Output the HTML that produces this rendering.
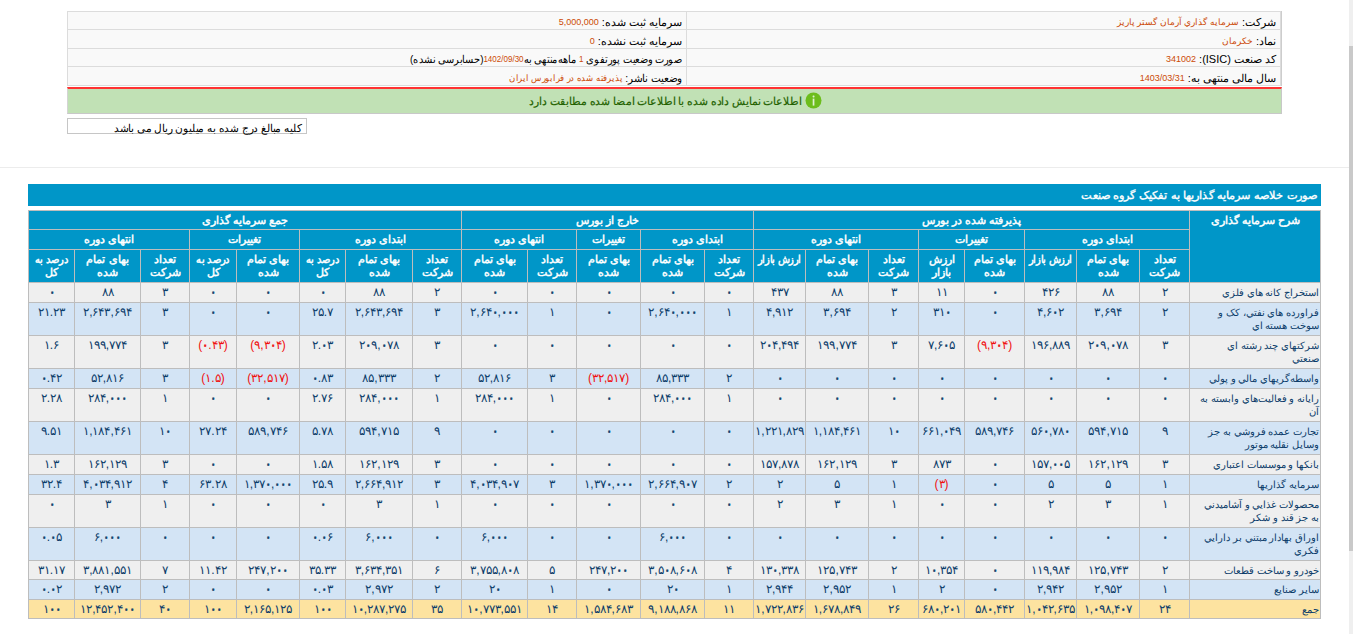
<!DOCTYPE html>
<html lang="fa" dir="rtl">
<head>
<meta charset="utf-8">
<style>
html,body{margin:0;padding:0;background:#fff;width:1353px;height:634px;overflow:hidden;}
body{position:relative;font-family:"Liberation Sans",sans-serif;}
.sb{position:absolute;left:1349px;top:0;width:4px;height:634px;background:#efefef;}
.sb i{position:absolute;left:0;top:46px;width:4px;height:505px;background:#c9c9c9;}
#info{position:absolute;left:67px;top:11px;width:1214px;box-shadow:1px 0 0 #cdcdcd;border-collapse:collapse;table-layout:fixed;background:#f9f9f9;}
#info td{border:1px solid #dcdcdc;padding:4px 4px 0 0;font-size:11px;color:#000;white-space:nowrap;overflow:hidden;text-align:right;vertical-align:middle;}
#info .sx{display:inline-block;transform-origin:100% 50%;}
#info .v{color:#cc4a06;font-size:9px;vertical-align:1px;}
#green{position:absolute;left:67px;top:87px;width:1213px;height:24px;background:#c1e1b5;border-top:2px solid #f33;border-bottom:1px solid #c8c8c8;border-right:1px solid #c8c8c8;border-left:1px solid #d4d4d4;}
#green span{position:absolute;right:479px;top:6px;font-size:11px;transform:scaleX(0.975);transform-origin:100% 50%;color:#236200;white-space:nowrap;-webkit-text-stroke:0.2px #236200;}
#green svg{position:absolute;left:737px;top:3px;width:17px;height:17px;}
#note{position:absolute;left:67px;top:118px;width:238px;height:14px;border:1px solid #c6c6c6;background:#fff;font-size:11px;color:#000;text-align:right;}
#note span{position:absolute;right:5px;top:3px;white-space:nowrap;transform:scaleX(0.96);transform-origin:100% 50%;}
.hr{position:absolute;left:0;top:167px;width:1349px;height:1px;background:#ececec;}
#title{position:absolute;left:28px;top:184px;width:1293px;height:22px;background:#0096c8;color:#fff;font-size:11px;font-weight:normal;}
#title span{position:absolute;right:4px;top:5px;white-space:nowrap;-webkit-text-stroke:0.35px #fff;transform:scaleX(1.025);transform-origin:100% 50%;}
#dt{position:absolute;left:28px;top:210px;border-collapse:collapse;table-layout:fixed;width:1293px;}
#dt th,#dt td{border:1px solid #bdbdbd;padding:0;font-size:10px;white-space:nowrap;overflow:hidden;vertical-align:top;text-align:center;line-height:13px;}
#dt th{background:#0096c8;color:#fff;font-weight:normal;font-size:11px;-webkit-text-stroke:0.45px #fff;padding-top:3px;}
#dt th.t{text-align:center;}
#dt th .c2{display:block;margin:0 -12px;transform:scaleX(0.9);transform-origin:50% 50%;}
#dt th .c{display:block;margin:0 -12px;transform:scaleX(0.9);transform-origin:50% 50%;}
#dt td{color:#0c3d6a;padding-top:3px;font-size:12px;}
#dt td.d{text-align:right;padding-right:1px;font-size:10px;}
#dt tr.r0 td{background:#efefef;}
#dt tr.r1 td{background:#d3e4f5;}
#dt tr.tot td{background:#fde3a0;}
#dt td.neg{color:#f01010;}
#dt td b{font-weight:normal;-webkit-text-stroke:0.7px currentColor;}
</style>
</head>
<body>
<div class="sb"><i></i></div>
<table id="info">
<colgroup><col style="width:594px"><col style="width:619px"></colgroup>
<tr style="height:18px"><td>شرکت: <span class="v">سرمايه گذاري آرمان گستر پاريز</span></td><td>سرمایه ثبت شده: <span class="v">5,000,000</span></td></tr>
<tr style="height:19px"><td>نماد: <span class="v">خکرمان</span></td><td>سرمایه ثبت نشده: <span class="v">0</span></td></tr>
<tr style="height:18px"><td>کد صنعت (ISIC): <span class="v">341002</span></td><td><span class="sx" style="transform:scaleX(0.892)">صورت وضعیت پورتفوی <span class="v">1</span> ماهه‌منتهی به<span class="v">1402/09/30</span>(حسابرسی نشده)</span></td></tr>
<tr style="height:19px"><td>سال مالی منتهی به: <span class="v">1403/03/31</span></td><td><span class="sx" style="transform:scaleX(0.946)">وضعیت ناشر: <span class="v">پذیرفته شده در فرابورس ایران</span></span></td></tr>
</table>
<div id="green"><svg viewBox="0 0 17 17"><circle cx="8.5" cy="8.5" r="8" fill="#6cbd1c"/><rect x="7.6" y="3.6" width="1.9" height="1.8" rx="0.6" fill="#dff2cf"/><rect x="7.7" y="6.6" width="1.7" height="7" fill="#dff2cf"/></svg><span>اطلاعات نمایش داده شده با اطلاعات امضا شده مطابقت دارد</span></div>
<div id="note"><span>کلیه مبالغ درج شده به میلیون ریال می باشد</span></div>
<div class="hr"></div>
<div id="title"><span>صورت خلاصه سرمایه گذاریها به تفکیک گروه صنعت</span></div>
<table id="dt"><colgroup><col style="width:131px"><col style="width:50px"><col style="width:63px"><col style="width:52px"><col style="width:60px"><col style="width:46px"><col style="width:50px"><col style="width:63px"><col style="width:52px"><col style="width:49px"><col style="width:64px"><col style="width:64px"><col style="width:49px"><col style="width:66px"><col style="width:49px"><col style="width:67px"><col style="width:46px"><col style="width:63px"><col style="width:47px"><col style="width:49px"><col style="width:66px"><col style="width:46px"></colgroup><thead><tr style="height:19px"><th rowspan="3" class="t">شرح سرمایه گذاری</th><th colspan="8">پذیرفته شده در بورس</th><th colspan="5">خارج از بورس</th><th colspan="8">جمع سرمایه گذاری</th></tr>
<tr style="height:20px"><th colspan="3">ابتدای دوره</th><th colspan="2">تغییرات</th><th colspan="3">انتهای دوره</th><th colspan="2">ابتدای دوره</th><th>تغییرات</th><th colspan="2">انتهای دوره</th><th colspan="3">ابتدای دوره</th><th colspan="2">تغییرات</th><th colspan="3">انتهای دوره</th></tr>
<tr style="height:33px"><th>تعداد<br>شرکت</th><th>بهای تمام<br>شده</th><th><span class="c">ارزش بازار</span></th><th>بهای تمام<br>شده</th><th>ارزش<br>بازار</th><th>تعداد<br>شرکت</th><th>بهای تمام<br>شده</th><th><span class="c">ارزش بازار</span></th><th>تعداد<br>شرکت</th><th>بهای تمام<br>شده</th><th>بهای تمام<br>شده</th><th>تعداد<br>شرکت</th><th>بهای تمام<br>شده</th><th>تعداد<br>شرکت</th><th>بهای تمام<br>شده</th><th><span class="c2">درصد به</span>کل</th><th>بهای تمام<br>شده</th><th><span class="c2">درصد به</span>کل</th><th>تعداد<br>شرکت</th><th>بهای تمام<br>شده</th><th><span class="c2">درصد به</span>کل</th></tr></thead><tbody><tr class="r0" style="height:20px"><td class="d">استخراج کانه هاي فلزي</td><td>۲</td><td>۸۸</td><td>۴۲۶</td><td><b>۰</b></td><td>۱۱</td><td>۳</td><td>۸۸</td><td>۴۳۷</td><td><b>۰</b></td><td><b>۰</b></td><td><b>۰</b></td><td><b>۰</b></td><td><b>۰</b></td><td>۲</td><td>۸۸</td><td><b>۰</b></td><td><b>۰</b></td><td><b>۰</b></td><td>۳</td><td>۸۸</td><td><b>۰</b></td></tr><tr class="r1" style="height:33px"><td class="d">فراورده هاي نفتي، کک و<br>سوخت هسته اي</td><td>۲</td><td>۳,۶۹۴</td><td>۴,۶<b>۰</b>۲</td><td><b>۰</b></td><td>۳۱<b>۰</b></td><td>۲</td><td>۳,۶۹۴</td><td>۴,۹۱۲</td><td>۱</td><td>۲,۶۴<b>۰</b>,<b>۰</b><b>۰</b><b>۰</b></td><td><b>۰</b></td><td>۱</td><td>۲,۶۴<b>۰</b>,<b>۰</b><b>۰</b><b>۰</b></td><td>۳</td><td>۲,۶۴۳,۶۹۴</td><td>۲۵.۷</td><td><b>۰</b></td><td><b>۰</b></td><td>۳</td><td>۲,۶۴۳,۶۹۴</td><td>۲۱.۲۳</td></tr><tr class="r0" style="height:33px"><td class="d">شرکتهاي چند رشته اي<br>صنعتي</td><td>۳</td><td>۲<b>۰</b>۹,<b>۰</b>۷۸</td><td>۱۹۶,۸۸۹</td><td class="neg">(۹,۳<b>۰</b>۴)</td><td>۷,۶<b>۰</b>۵</td><td>۳</td><td>۱۹۹,۷۷۴</td><td>۲<b>۰</b>۴,۴۹۴</td><td><b>۰</b></td><td><b>۰</b></td><td><b>۰</b></td><td><b>۰</b></td><td><b>۰</b></td><td>۳</td><td>۲<b>۰</b>۹,<b>۰</b>۷۸</td><td>۲.<b>۰</b>۳</td><td class="neg">(۹,۳<b>۰</b>۴)</td><td class="neg">(<b>۰</b>.۴۳)</td><td>۳</td><td>۱۹۹,۷۷۴</td><td>۱.۶</td></tr><tr class="r1" style="height:20px"><td class="d">واسطه‌گريهاي مالي و پولي</td><td><b>۰</b></td><td><b>۰</b></td><td><b>۰</b></td><td><b>۰</b></td><td><b>۰</b></td><td><b>۰</b></td><td><b>۰</b></td><td><b>۰</b></td><td>۲</td><td>۸۵,۳۳۳</td><td class="neg">(۳۲,۵۱۷)</td><td>۳</td><td>۵۲,۸۱۶</td><td>۲</td><td>۸۵,۳۳۳</td><td><b>۰</b>.۸۳</td><td class="neg">(۳۲,۵۱۷)</td><td class="neg">(۱.۵)</td><td>۳</td><td>۵۲,۸۱۶</td><td><b>۰</b>.۴۲</td></tr><tr class="r0" style="height:33px"><td class="d">رايانه و فعاليت‌هاي وابسته به<br>آن</td><td><b>۰</b></td><td><b>۰</b></td><td><b>۰</b></td><td><b>۰</b></td><td><b>۰</b></td><td><b>۰</b></td><td><b>۰</b></td><td><b>۰</b></td><td>۱</td><td>۲۸۴,<b>۰</b><b>۰</b><b>۰</b></td><td><b>۰</b></td><td>۱</td><td>۲۸۴,<b>۰</b><b>۰</b><b>۰</b></td><td>۱</td><td>۲۸۴,<b>۰</b><b>۰</b><b>۰</b></td><td>۲.۷۶</td><td><b>۰</b></td><td><b>۰</b></td><td>۱</td><td>۲۸۴,<b>۰</b><b>۰</b><b>۰</b></td><td>۲.۲۸</td></tr><tr class="r1" style="height:33px"><td class="d">تجارت عمده فروشي به جز<br>وسايل نقليه موتور</td><td>۹</td><td>۵۹۴,۷۱۵</td><td>۵۶<b>۰</b>,۷۸<b>۰</b></td><td>۵۸۹,۷۴۶</td><td>۶۶۱,<b>۰</b>۴۹</td><td>۱<b>۰</b></td><td>۱,۱۸۴,۴۶۱</td><td>۱,۲۲۱,۸۲۹</td><td><b>۰</b></td><td><b>۰</b></td><td><b>۰</b></td><td><b>۰</b></td><td><b>۰</b></td><td>۹</td><td>۵۹۴,۷۱۵</td><td>۵.۷۸</td><td>۵۸۹,۷۴۶</td><td>۲۷.۲۴</td><td>۱<b>۰</b></td><td>۱,۱۸۴,۴۶۱</td><td>۹.۵۱</td></tr><tr class="r0" style="height:20px"><td class="d">بانکها و موسسات اعتباري</td><td>۳</td><td>۱۶۲,۱۲۹</td><td>۱۵۷,<b>۰</b><b>۰</b>۵</td><td><b>۰</b></td><td>۸۷۳</td><td>۳</td><td>۱۶۲,۱۲۹</td><td>۱۵۷,۸۷۸</td><td><b>۰</b></td><td><b>۰</b></td><td><b>۰</b></td><td><b>۰</b></td><td><b>۰</b></td><td>۳</td><td>۱۶۲,۱۲۹</td><td>۱.۵۸</td><td><b>۰</b></td><td><b>۰</b></td><td>۳</td><td>۱۶۲,۱۲۹</td><td>۱.۳</td></tr><tr class="r1" style="height:20px"><td class="d">سرمايه گذاريها</td><td>۱</td><td>۵</td><td>۵</td><td><b>۰</b></td><td class="neg">(۳)</td><td>۱</td><td>۵</td><td>۲</td><td>۲</td><td>۲,۶۶۴,۹<b>۰</b>۷</td><td>۱,۳۷<b>۰</b>,<b>۰</b><b>۰</b><b>۰</b></td><td>۳</td><td>۴,<b>۰</b>۳۴,۹<b>۰</b>۷</td><td>۳</td><td>۲,۶۶۴,۹۱۲</td><td>۲۵.۹</td><td>۱,۳۷<b>۰</b>,<b>۰</b><b>۰</b><b>۰</b></td><td>۶۳.۲۸</td><td>۴</td><td>۴,<b>۰</b>۳۴,۹۱۲</td><td>۳۲.۴</td></tr><tr class="r0" style="height:33px"><td class="d">محصولات غذايي و آشاميدني<br>به جز قند و شکر</td><td>۱</td><td>۳</td><td>۲</td><td><b>۰</b></td><td><b>۰</b></td><td>۱</td><td>۳</td><td>۲</td><td><b>۰</b></td><td><b>۰</b></td><td><b>۰</b></td><td><b>۰</b></td><td><b>۰</b></td><td>۱</td><td>۳</td><td><b>۰</b></td><td><b>۰</b></td><td><b>۰</b></td><td>۱</td><td>۳</td><td><b>۰</b></td></tr><tr class="r1" style="height:33px"><td class="d">اوراق بهادار مبتني بر دارايي<br>فکري</td><td><b>۰</b></td><td><b>۰</b></td><td><b>۰</b></td><td><b>۰</b></td><td><b>۰</b></td><td><b>۰</b></td><td><b>۰</b></td><td><b>۰</b></td><td><b>۰</b></td><td>۶,<b>۰</b><b>۰</b><b>۰</b></td><td><b>۰</b></td><td><b>۰</b></td><td>۶,<b>۰</b><b>۰</b><b>۰</b></td><td><b>۰</b></td><td>۶,<b>۰</b><b>۰</b><b>۰</b></td><td><b>۰</b>.<b>۰</b>۶</td><td><b>۰</b></td><td><b>۰</b></td><td><b>۰</b></td><td>۶,<b>۰</b><b>۰</b><b>۰</b></td><td><b>۰</b>.<b>۰</b>۵</td></tr><tr class="r0" style="height:19px"><td class="d">خودرو و ساخت قطعات</td><td>۲</td><td>۱۲۵,۷۴۳</td><td>۱۱۹,۹۸۴</td><td><b>۰</b></td><td>۱<b>۰</b>,۳۵۴</td><td>۲</td><td>۱۲۵,۷۴۳</td><td>۱۳<b>۰</b>,۳۳۸</td><td>۴</td><td>۳,۵<b>۰</b>۸,۶<b>۰</b>۸</td><td>۲۴۷,۲<b>۰</b><b>۰</b></td><td>۵</td><td>۳,۷۵۵,۸<b>۰</b>۸</td><td>۶</td><td>۳,۶۳۴,۳۵۱</td><td>۳۵.۳۳</td><td>۲۴۷,۲<b>۰</b><b>۰</b></td><td>۱۱.۴۲</td><td>۷</td><td>۳,۸۸۱,۵۵۱</td><td>۳۱.۱۷</td></tr><tr class="r1" style="height:20px"><td class="d">ساير صنايع</td><td>۱</td><td>۲,۹۵۲</td><td>۲,۹۴۲</td><td><b>۰</b></td><td>۲</td><td>۱</td><td>۲,۹۵۲</td><td>۲,۹۴۴</td><td>۱</td><td>۲<b>۰</b></td><td><b>۰</b></td><td>۱</td><td>۲<b>۰</b></td><td>۲</td><td>۲,۹۷۲</td><td><b>۰</b>.<b>۰</b>۳</td><td><b>۰</b></td><td><b>۰</b></td><td>۲</td><td>۲,۹۷۲</td><td><b>۰</b>.<b>۰</b>۲</td></tr><tr class="tot" style="height:19px"><td class="d">جمع</td><td>۲۴</td><td>۱,<b>۰</b>۹۸,۴<b>۰</b>۷</td><td>۱,<b>۰</b>۴۲,۶۳۵</td><td>۵۸<b>۰</b>,۴۴۲</td><td>۶۸<b>۰</b>,۲<b>۰</b>۱</td><td>۲۶</td><td>۱,۶۷۸,۸۴۹</td><td>۱,۷۲۲,۸۳۶</td><td>۱۱</td><td>۹,۱۸۸,۸۶۸</td><td>۱,۵۸۴,۶۸۳</td><td>۱۴</td><td>۱<b>۰</b>,۷۷۳,۵۵۱</td><td>۳۵</td><td>۱<b>۰</b>,۲۸۷,۲۷۵</td><td>۱<b>۰</b><b>۰</b></td><td>۲,۱۶۵,۱۲۵</td><td>۱<b>۰</b><b>۰</b></td><td>۴<b>۰</b></td><td>۱۲,۴۵۲,۴<b>۰</b><b>۰</b></td><td>۱<b>۰</b><b>۰</b></td></tr></tbody></table>
</body>
</html>
